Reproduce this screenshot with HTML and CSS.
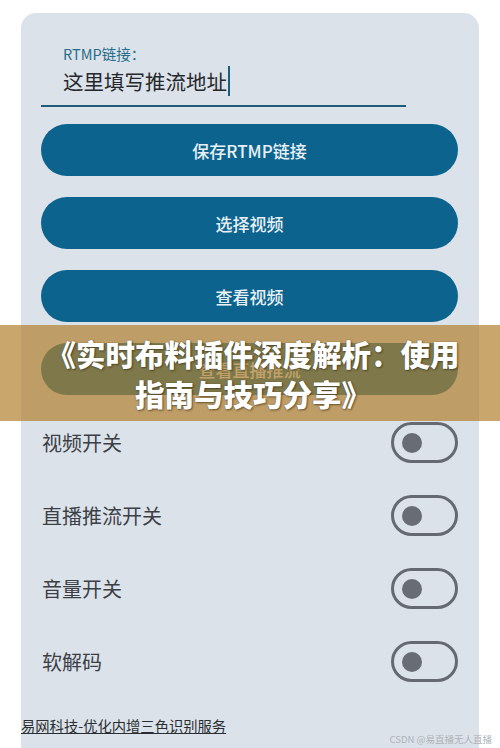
FILE: index.html
```html
<!DOCTYPE html>
<html lang="zh-CN">
<head>
<meta charset="utf-8">
<title>RTMP</title>
<link rel="stylesheet" href="styles.css">
</head>
<body>
<div class="page">
  <div class="card">
    <div class="field">
      <div class="field-label">RTMP链接：</div>
      <div class="field-input"><span class="field-text">这里填写推流地址</span><span class="cursor"></span></div>
    </div>
    <div class="buttons">
      <div class="btn">保存RTMP链接</div>
      <div class="btn">选择视频</div>
      <div class="btn">查看视频</div>
      <div class="btn">查看直播推流</div>
    </div>
    <div class="rows">
      <div class="row"><span class="row-label">视频开关</span><span class="switch"><span class="knob"></span></span></div>
      <div class="row"><span class="row-label">直播推流开关</span><span class="switch"><span class="knob"></span></span></div>
      <div class="row"><span class="row-label">音量开关</span><span class="switch"><span class="knob"></span></span></div>
      <div class="row"><span class="row-label">软解码</span><span class="switch"><span class="knob"></span></span></div>
    </div>
  </div>
  <div class="banner">
    <div class="banner-line">《实时布料插件深度解析：使用</div>
    <div class="banner-line">指南与技巧分享》</div>
  </div>
  <div class="footer-link">易网科技-优化内增三色识别服务</div>
  <div class="watermark">CSDN @易直播无人直播</div>
</div>
</body>
</html>
```
FILE: styles.css
```css
html, body {
  margin: 0;
  padding: 0;
  background: #ffffff;
}
body {
  font-family: "Noto Sans CJK SC", "Noto Sans", sans-serif;
}
.page {
  position: relative;
  width: 500px;
  height: 748px;
  overflow: hidden;
  background: #ffffff;
}
.card {
  margin: 13px 21px 0 21px;
  height: 780px;
  background: #dce2e9;
  border-radius: 15px 15px 0 0;
  padding: 31px 21px 0 20px;
  box-sizing: border-box;
}
.field {
  width: 365px;
  border-bottom: 2px solid #1f5a78;
  padding: 0 0 9px 22px;
  box-sizing: border-box;
}
.field-label {
  font-size: 14.5px;
  line-height: 20px;
  color: #276d8b;
}
.field-input {
  display: flex;
  align-items: center;
  height: 30px;
  margin-top: 2px;
}
.field-text {
  font-size: 20.5px;
  line-height: 30px;
  color: #25282c;
}
.cursor {
  display: inline-block;
  width: 2px;
  height: 30px;
  background: #1d5d7c;
  margin-left: 1px;
}
.buttons {
  display: flex;
  flex-direction: column;
  gap: 21px;
  margin-top: 17px;
}
.btn {
  height: 52px;
  border-radius: 26px;
  background: #0c648e;
  color: #e9f1f6;
  font-size: 17px;
  font-weight: 500;
  display: flex;
  align-items: center;
  justify-content: center;
}
.rows {
  display: flex;
  flex-direction: column;
  gap: 32px;
  margin-top: 27px;
}
.row {
  height: 41px;
  display: flex;
  align-items: center;
  justify-content: space-between;
}
.row-label {
  font-size: 20px;
  color: #3b4047;
  padding-left: 1px;
}
.switch {
  width: 67px;
  height: 41px;
  box-sizing: border-box;
  border: 3px solid #656a72;
  border-radius: 21px;
  display: flex;
  align-items: center;
  padding-left: 8px;
}
.knob {
  width: 20px;
  height: 20px;
  border-radius: 50%;
  background: #676c75;
}
.banner {
  position: absolute;
  left: 0;
  top: 325px;
  width: 500px;
  height: 96px;
  box-sizing: border-box;
  padding: 8px 0 0 6px;
  background: rgba(176, 128, 46, 0.7);
  text-align: center;
}
.banner-line {
  font-size: 29.5px;
  line-height: 40px;
  font-weight: 900;
  color: #ffffff;
  text-shadow: 1px 1px 2px rgba(40, 30, 10, 0.55), 0 0 1px rgba(40, 30, 10, 0.5);
}
.footer-link {
  position: absolute;
  left: 21px;
  top: 715px;
  font-size: 14.3px;
  line-height: 22px;
  color: #2a2e33;
  text-decoration: underline;
}
.watermark {
  position: absolute;
  right: 8px;
  bottom: 3px;
  font-size: 9.5px;
  line-height: 12px;
  color: #aeb3ba;
}
```
